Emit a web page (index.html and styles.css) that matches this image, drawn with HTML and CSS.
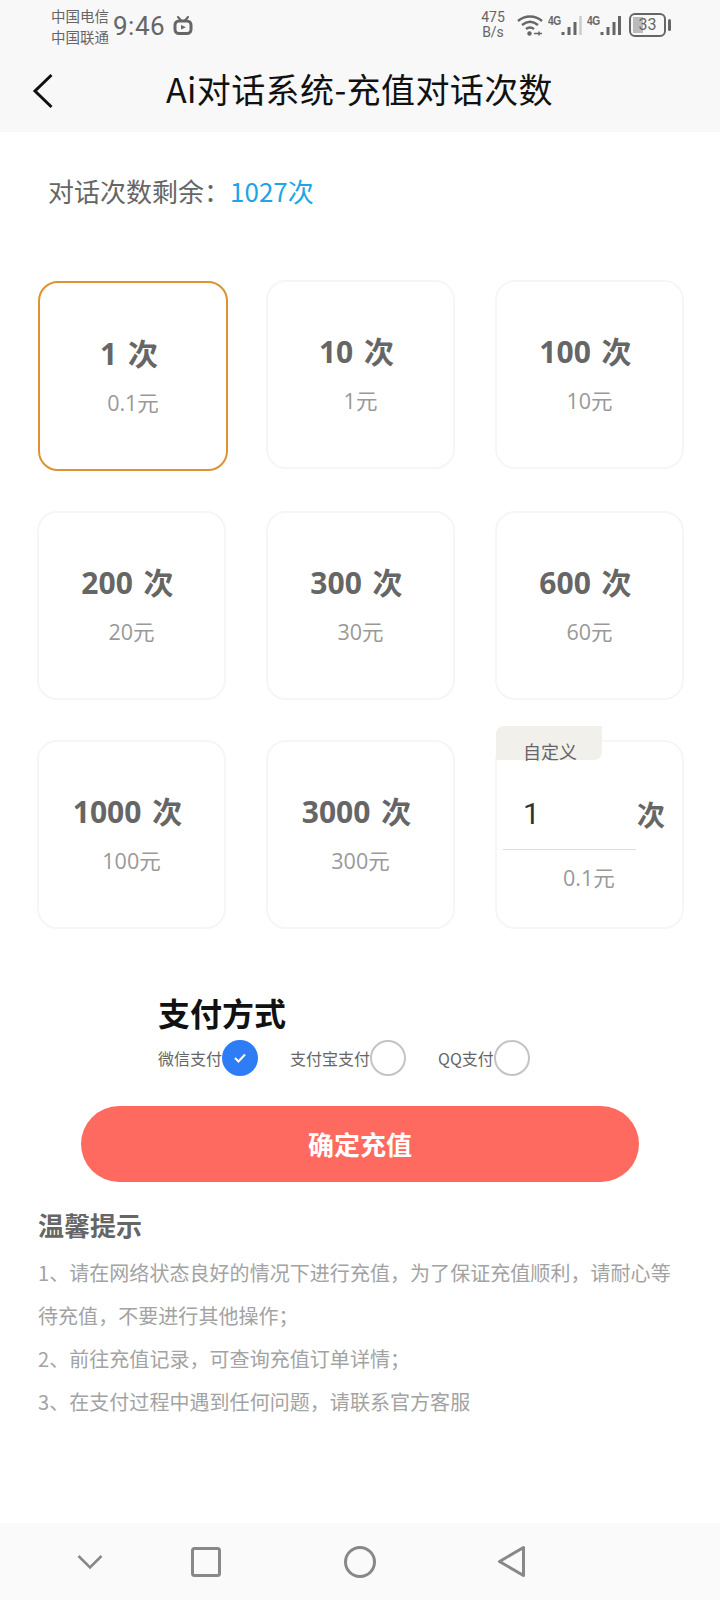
FILE: index.html
```html
<html>
	<head>
		<meta charset="utf-8">
		<link rel="stylesheet" href="styles.css">
	</head>
	<body>
		<div id="container">
			<div class="top">
				<div class="status">
					<div class="carriers"><span>中国电信</span><span>中国联通</span></div>
					<span class="time">9:46</span>
					<svg class="tv" width="20" height="19" viewBox="0 0 20 19"><path d="M5 1l3.500 4M15 1l-3.500 4" stroke="#666" stroke-width="2" fill="none" stroke-linecap="round"/><rect x="2" y="5" width="16" height="12.500" rx="4" fill="none" stroke="#666" stroke-width="3"/><path d="M8 9l5 2.300L8 13.500z" fill="#666"/></svg>
					<div class="status-right">
						<div class="speed"><span>475</span><span>B/s</span></div>
						<svg class="wifi" width="26" height="22" viewBox="0 0 26 22"><path d="M1 7c7-6 17-6 24 0M5 11c5-4 11-4 16 0M9 15c2.500-2 5.500-2 8 0" stroke="#666" stroke-width="2.400" fill="none"/><circle cx="12.500" cy="19.500" r="2.200" fill="#666"/><path d="M17 19.500h8M22 17.500v4" stroke="#666" stroke-width="1.500"/></svg>
						<div class="signal"><b>4G</b><svg width="21" height="22" viewBox="0 0 21 22"><path d="M2 18v3M8 13v8M14 8v13" stroke="#666" stroke-width="3"/><path d="M19.500 2v19" stroke="#ccc" stroke-width="2.500"/></svg></div>
						<div class="signal"><b>4G</b><svg width="21" height="22" viewBox="0 0 21 22"><path d="M2 18v3M8 13v8M14 8v13M19.500 2v19" stroke="#666" stroke-width="3"/></svg></div>
						<div class="battery"><div class="battery-box"><i class="battery-fill"></i><span>33</span></div><i class="battery-tip"></i></div>
					</div>
				</div>
				<div class="head">
					<svg class="back" width="22" height="36" viewBox="0 0 22 36"><path d="M19.500 2L3 18l16.500 16" stroke="#111" stroke-width="3" fill="none"/></svg>
					<div class="title">Ai对话系统-充值对话次数</div>
				</div>
			</div>

			<div class="remain">对话次数剩余：<span class="remain-num">1027次</span></div>

			<div class="cards">
				<div class="card card-on"><div class="times">1 次</div><div class="price">0.1元</div></div>
				<div class="card"><div class="times">10 次</div><div class="price">1元</div></div>
				<div class="card"><div class="times">100 次</div><div class="price">10元</div></div>
				<div class="card"><div class="times">200 次</div><div class="price">20元</div></div>
				<div class="card"><div class="times">300 次</div><div class="price">30元</div></div>
				<div class="card"><div class="times">600 次</div><div class="price">60元</div></div>
				<div class="card"><div class="times">1000 次</div><div class="price">100元</div></div>
				<div class="card"><div class="times">3000 次</div><div class="price">300元</div></div>
				<div class="card card-custom">
					<div class="custom-tag">自定义</div>
					<div class="custom-row"><div class="custom-input">1</div><div class="custom-unit">次</div></div>
					<div class="custom-price">0.1元</div>
				</div>
			</div>

			<div class="pay">
				<div class="pay-title">支付方式</div>
				<div class="pay-row">
					<div class="pay-item"><span>微信支付</span><span class="radio radio-on"><svg width="14" height="12" viewBox="0 0 14 12"><path d="M2 6l3.500 3.500L12 2.500" stroke="#fff" stroke-width="2" fill="none"/></svg></span></div>
					<div class="pay-item"><span>支付宝支付</span><span class="radio"></span></div>
					<div class="pay-item"><span>QQ支付</span><span class="radio"></span></div>
				</div>
			</div>

			<div class="submit">确定充值</div>

			<div class="tips">
				<div class="tips-title">温馨提示</div>
				<div class="tips-line">1、请在网络状态良好的情况下进行充值，为了保证充值顺利，请耐心等待充值，不要进行其他操作；</div>
				<div class="tips-line">2、前往充值记录，可查询充值订单详情；</div>
				<div class="tips-line">3、在支付过程中遇到任何问题，请联系官方客服</div>
			</div>

			<div class="navbar">
				<svg width="26" height="16" viewBox="0 0 26 16"><path d="M1.500 2L13 13.500 24.500 2" stroke="#888" stroke-width="2.500" fill="none"/></svg>
				<svg class="nav-recent" width="30" height="30" viewBox="0 0 30 30"><rect x="1.500" y="1.500" width="27" height="27" rx="2" stroke="#888" stroke-width="3" fill="none"/></svg>
				<svg class="nav-home" width="34" height="34" viewBox="0 0 34 34"><circle cx="17" cy="17" r="14.500" stroke="#888" stroke-width="3" fill="none"/></svg>
				<svg class="nav-back" width="29" height="33" viewBox="0 0 29 33"><path d="M26.500 2.500v28L2.500 16.500z" stroke="#888" stroke-width="3" stroke-linejoin="round" fill="none"/></svg>
			</div>
		</div>
	</body>
</html>
```
FILE: styles.css
```css
body {
	background-color: #fff;
	font-family: "Noto Sans CJK SC", "Noto Sans", sans-serif;
	color: #666;
	margin: 0;
	overflow: hidden;
}
#container {
	width: 720px;
	height: 1600px;
	display: flex;
	flex-direction: column;
	overflow: hidden;
}
.top {
	background-color: #f8f8f8;
	height: 132px;
}
.status {
	height: 50px;
	display: flex;
	align-items: center;
	padding-left: 51px;
	padding-right: 49px;
}
.carriers {
	display: flex;
	flex-direction: column;
	font-size: 14.500px;
	line-height: 21px;
	width: 62px;
	padding-top: 1px;
}
.carriers span {
	display: block;
}
.time {
	font-family: "Roboto", sans-serif;
	font-size: 26px;
	letter-spacing: 0.5px;
	margin-top: 2px;
	width: 60px;
}
.tv {
	margin-top: 1px;
}
.status-right {
	margin-left: auto;
	display: flex;
	align-items: center;
}
.speed {
	font-family: "Roboto", sans-serif;
	display: flex;
	flex-direction: column;
	align-items: center;
	font-size: 14px;
	line-height: 15px;
	width: 26px;
	margin-right: 11px;
}
.signal {
	display: flex;
	align-items: flex-start;
	margin-left: 5px;
	width: 34px;
}
.wifi {
	margin-right: 0;
}
.signal b {
	font-family: "Liberation Sans", sans-serif;
	font-size: 12px;
	line-height: 15px;
	width: 13px;
	letter-spacing: -0.5px;
	transform: scaleX(0.85);
	transform-origin: left;
}
.battery {
	display: flex;
	align-items: center;
	margin-left: 8px;
}
.battery-box {
	position: relative;
	width: 33px;
	height: 20px;
	border: 2px solid #666;
	border-radius: 6px;
	font-family: "Roboto", sans-serif;
	font-size: 16px;
	line-height: 20px;
	text-align: center;
	overflow: hidden;
}
.battery-box span {
	position: relative;
}
.battery-fill {
	position: absolute;
	left: 2px;
	top: 2px;
	bottom: 2px;
	width: 10px;
	background-color: #bbb;
}
.battery-tip {
	display: block;
	width: 3px;
	height: 12px;
	background-color: #666;
	border-radius: 2px;
	margin-left: 2px;
}
.head {
	height: 82px;
	display: flex;
	align-items: center;
	padding-left: 32px;
}
.title {
	color: #111;
	font-size: 34px;
	margin-left: 112px;
	margin-top: -5px;
	letter-spacing: 0.4px;
}
.remain {
	font-size: 26px;
	margin-top: 39px;
	padding-left: 48px;
	line-height: 40px;
}
.remain-num {
	color: #1ca6e6;
}
.cards {
	display: grid;
	grid-template-columns: 189px 189px 189px;
	grid-template-rows: 191px 189px 189px;
	column-gap: 40px;
	row-gap: 40px;
	margin-top: 69px;
	padding-left: 37px;
}
.card {
	box-sizing: border-box;
	width: 189px;
	height: 189px;
	border: 2px solid #f6f6f6;
	border-radius: 20px;
	display: flex;
	flex-direction: column;
	align-items: center;
	position: relative;
	padding-top: 50px;
	font-family: "Open Sans", "Noto Sans CJK SC", sans-serif;
}
.card-on {
	width: 190px;
	height: 190px;
	border-color: #df9232;
	padding-top: 51px;
	transform: translate(1px, 1px);
}
.times {
	font-size: 30px;
	font-weight: 700;
	line-height: 40px;
	word-spacing: 3px;
	margin-right: 8px;
}
.price {
	color: #999;
	font-size: 21.500px;
	line-height: 30px;
	margin-top: 14px;
}
.card-custom {
	align-items: flex-start;
	padding-top: 50px;
}
.custom-tag {
	position: absolute;
	left: -1px;
	top: -16px;
	width: 106px;
	height: 34px;
	box-sizing: border-box;
	padding-top: 14px;
	padding-left: 27px;
	background-color: #f1f0ea;
	border-radius: 8px 0 8px 0;
	font-size: 18px;
	line-height: 24px;
}
.custom-row {
	display: flex;
	width: 168px;
	margin-left: 6px;
	align-items: center;
}
.custom-input {
	box-sizing: border-box;
	width: 133px;
	height: 58px;
	padding-left: 20px;
	line-height: 44px;
	font-size: 30px;
	color: #333;
	border-bottom: 1px solid #ddd;
	font-family: "Roboto", sans-serif;
}
.custom-unit {
	font-size: 28px;
	font-weight: 700;
	margin-left: 1px;
	margin-bottom: 14px;
}
.custom-price {
	color: #999;
	font-size: 21.500px;
	line-height: 30px;
	margin-top: 13px;
	margin-left: 66px;
}
.pay {
	margin-top: 60px;
	padding-left: 158px;
}
.pay-title {
	color: #111;
	font-size: 32px;
	font-weight: 700;
	line-height: 44px;
	margin-top: 1px;
	margin-bottom: 6px;
}
.pay-row {
	display: flex;
	gap: 32px;
}
.pay-item {
	display: flex;
	align-items: center;
	font-size: 16px;
}
.radio {
	box-sizing: border-box;
	width: 36px;
	height: 36px;
	border: 2px solid #c4c4c4;
	border-radius: 50%;
	display: flex;
	align-items: center;
	justify-content: center;
}
.radio-on {
	background-color: #2e7cf6;
	border-color: #2e7cf6;
}
.submit {
	margin: 30px 0 0 81px;
	width: 558px;
	height: 76px;
	border-radius: 38px;
	background-color: #ff6a60;
	color: #fff;
	font-size: 26px;
	font-weight: 700;
	line-height: 76px;
	text-align: center;
}
.tips {
	padding: 0 38px;
	margin-top: 23px;
}
.tips-title {
	font-size: 26px;
	font-weight: 700;
	line-height: 40px;
	margin-bottom: 6px;
}
.tips-line {
	color: #a3a3a3;
	font-size: 20px;
	letter-spacing: 0.05px;
	line-height: 43px;
}
.navbar {
	margin-top: auto;
	height: 77px;
	background-color: #fafafa;
	display: flex;
	align-items: center;
	padding-left: 77px;
}
.nav-recent {
	margin-left: 88px;
}
.nav-home {
	margin-left: 122px;
}
.nav-back {
	margin-left: 120px;
}
```
